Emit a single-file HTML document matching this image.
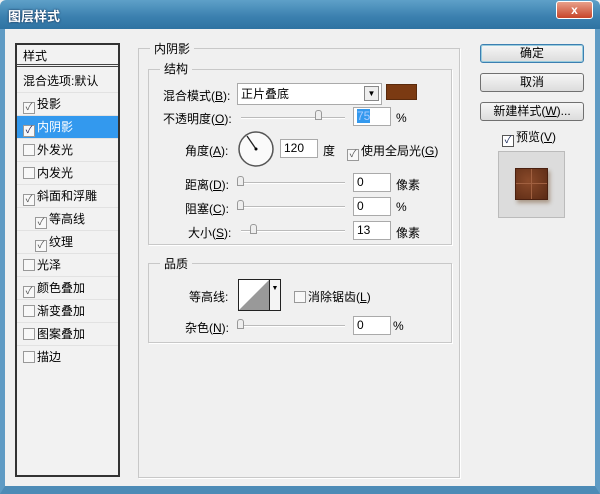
<!DOCTYPE html>
<html><head><meta charset="utf-8"><style>
*{margin:0;padding:0;box-sizing:border-box}
body{width:600px;height:494px;overflow:hidden;background:#f0f0f0;font-family:"Liberation Sans","Noto Sans CJK SC","WenQuanYi Zen Hei",sans-serif;font-size:12px;color:#000;position:relative}
.a{position:absolute;white-space:nowrap}
.title{left:0;top:0;width:600px;height:29px;background:linear-gradient(#5ea0c8,#3a7fae 60%,#2f73a2);border-radius:6px 6px 0 0}
.frame{left:0;top:29px;width:600px;height:465px;border-left:5px solid #5f9bc4;border-right:5px solid #5f9bc4;border-bottom:8px solid #4d8bb6}
.list{left:15px;top:43px;width:105px;height:434px;border:2px solid #333;background:#f2f2f2}
.it{position:absolute;left:0;width:101px;height:23px;border-bottom:1px solid #e2e2e2;line-height:22px;padding-left:6px}
.cb{display:inline-block;width:12px;height:12px;border:1px solid #999;background:#f8f8f8;vertical-align:-2px;margin-right:2px;font-size:10px;line-height:10px;text-align:center;color:#555}
.sel{background:#3399ee;color:#fff}
.grp{border:1px solid #c8c8c8;box-shadow:1px 1px 0 #fff}
.lg{background:#f0f0f0;padding:0 4px}
.in{background:#fff;border:1px solid #aaa;height:19px;line-height:17px;padding-left:3px}
.btn{left:480px;width:104px;height:19px;border:1px solid #707070;border-radius:3px;background:linear-gradient(#f6f6f6,#dcdcdc);text-align:center;line-height:17px}
.sl{height:2px;background:#bbb;border-bottom:1px solid #fff}
.kn{width:7px;height:10px;border:1px solid #999;border-radius:3px 3px 0 0;background:#eee}
u{text-decoration:underline}
</style></head><body>
<div class="a title"></div>
<div class="a" style="left:8px;top:6px;color:#fff;font-weight:bold;font-size:13px;text-shadow:0 0 2px #124">图层样式</div>
<div class="a" style="left:556px;top:1px;width:37px;height:18px;background:linear-gradient(#e8a08a,#c7452a);border:1px solid #fff;border-radius:3px;color:#fff;font-weight:bold;text-align:center;line-height:16px">x</div>
<div class="a frame"></div>

<div class="a list">
<div class="it" style="top:0;height:22px;border-bottom:3px double #444">样式</div>
<div class="it" style="top:25px">混合选项:默认</div>
<div class="it" style="top:48px"><span class="cb">✓</span>投影</div>
<div class="it sel" style="top:71px"><span class="cb" style="color:#225">✓</span>内阴影</div>
<div class="it" style="top:94px"><span class="cb"></span>外发光</div>
<div class="it" style="top:117px"><span class="cb"></span>内发光</div>
<div class="it" style="top:140px"><span class="cb">✓</span>斜面和浮雕</div>
<div class="it" style="top:163px;padding-left:18px"><span class="cb">✓</span>等高线</div>
<div class="it" style="top:186px;padding-left:18px"><span class="cb">✓</span>纹理</div>
<div class="it" style="top:209px"><span class="cb"></span>光泽</div>
<div class="it" style="top:232px"><span class="cb">✓</span>颜色叠加</div>
<div class="it" style="top:255px"><span class="cb"></span>渐变叠加</div>
<div class="it" style="top:278px"><span class="cb"></span>图案叠加</div>
<div class="it" style="top:301px;border:0"><span class="cb"></span>描边</div>
</div>

<div class="a grp" style="left:138px;top:48px;width:322px;height:430px"></div>
<div class="a lg" style="left:150px;top:40px">内阴影</div>
<div class="a grp" style="left:148px;top:69px;width:304px;height:176px"></div>
<div class="a lg" style="left:160px;top:60px">结构</div>

<div class="a" style="left:163px;top:87px">混合模式(<u>B</u>):</div>
<div class="a in" style="left:237px;top:83px;width:145px;height:22px;line-height:20px">正片叠底</div>
<div class="a" style="left:364px;top:86px;width:15px;height:15px;border:1px solid #888;background:#eee;font-size:8px;text-align:center;line-height:13px">▼</div>
<div class="a" style="left:386px;top:84px;width:31px;height:16px;background:#7b3a12;border:1px solid #5a2a0c"></div>

<div class="a" style="left:163px;top:110px">不透明度(<u>O</u>):</div>
<div class="a sl" style="left:241px;top:117px;width:104px"></div>
<div class="a kn" style="left:315px;top:110px"></div>
<div class="a in" style="left:353px;top:107px;width:38px"><span style="background:#3399ee;color:#aaccff">75</span></div>
<div class="a" style="left:396px;top:111px">%</div>

<div class="a" style="left:185px;top:142px">角度(<u>A</u>):</div>
<svg class="a" style="left:237px;top:130px" width="38" height="38"><circle cx="19" cy="19" r="17" fill="#fafafa" stroke="#555" stroke-width="1.5"/><line x1="19" y1="19" x2="10" y2="6" stroke="#222" stroke-width="1.3"/><circle cx="19" cy="19" r="1.5" fill="#000"/></svg>
<div class="a in" style="left:280px;top:139px;width:38px">120</div>
<div class="a" style="left:323px;top:142px">度</div>
<div class="a" style="left:347px;top:142px"><span class="cb">✓</span>使用全局光(<u>G</u>)</div>

<div class="a" style="left:185px;top:176px">距离(<u>D</u>):</div>
<div class="a sl" style="left:238px;top:182px;width:107px"></div>
<div class="a kn" style="left:237px;top:176px"></div>
<div class="a in" style="left:353px;top:173px;width:38px">0</div>
<div class="a" style="left:396px;top:176px">像素</div>

<div class="a" style="left:185px;top:200px">阻塞(<u>C</u>):</div>
<div class="a sl" style="left:238px;top:206px;width:107px"></div>
<div class="a kn" style="left:237px;top:200px"></div>
<div class="a in" style="left:353px;top:197px;width:38px">0</div>
<div class="a" style="left:396px;top:200px">%</div>

<div class="a" style="left:188px;top:224px">大小(<u>S</u>):</div>
<div class="a sl" style="left:241px;top:230px;width:104px"></div>
<div class="a kn" style="left:250px;top:224px"></div>
<div class="a in" style="left:353px;top:221px;width:38px">13</div>
<div class="a" style="left:396px;top:224px">像素</div>

<div class="a grp" style="left:148px;top:263px;width:304px;height:80px"></div>
<div class="a lg" style="left:160px;top:255px">品质</div>
<div class="a" style="left:189px;top:288px">等高线:</div>
<div class="a" style="left:238px;top:279px;width:43px;height:32px;border:1px solid #222;background:#fff"></div>
<svg class="a" style="left:239px;top:280px" width="30" height="30"><polygon points="0,30 30,0 30,30" fill="#999"/></svg>
<div class="a" style="left:269px;top:280px;width:11px;height:30px;border-left:1px solid #222;background:#f4f4f4;font-size:7px;text-align:center;line-height:18px">▼</div>
<div class="a" style="left:294px;top:288px"><span class="cb"></span>消除锯齿(<u>L</u>)</div>
<div class="a" style="left:185px;top:319px">杂色(<u>N</u>):</div>
<div class="a sl" style="left:238px;top:325px;width:107px"></div>
<div class="a kn" style="left:237px;top:319px"></div>
<div class="a in" style="left:353px;top:316px;width:38px">0</div>
<div class="a" style="left:393px;top:319px">%</div>

<div class="a btn" style="top:44px;border-color:#3c7fb1;box-shadow:inset 0 0 0 1px #9cd">确定</div>
<div class="a btn" style="top:73px">取消</div>
<div class="a btn" style="top:102px">新建样式(<u>W</u>)...</div>
<div class="a" style="left:502px;top:128px"><span class="cb" style="color:#125;border-color:#555;background:#fff">✓</span>预览(<u>V</u>)</div>
<div class="a" style="left:498px;top:151px;width:67px;height:67px;background:#dcdcdc;border:1px solid #bbb"></div>
<div class="a" style="left:515px;top:168px;width:33px;height:32px;background:radial-gradient(circle at 40% 40%,#8a4a2a,#5a2a14);box-shadow:2px 3px 4px #a98;border:1px solid #4a2010"></div>
<div class="a" style="left:531px;top:169px;width:1px;height:30px;background:#a06040"></div>
<div class="a" style="left:516px;top:183px;width:31px;height:1px;background:#a06040"></div>
</body></html>
